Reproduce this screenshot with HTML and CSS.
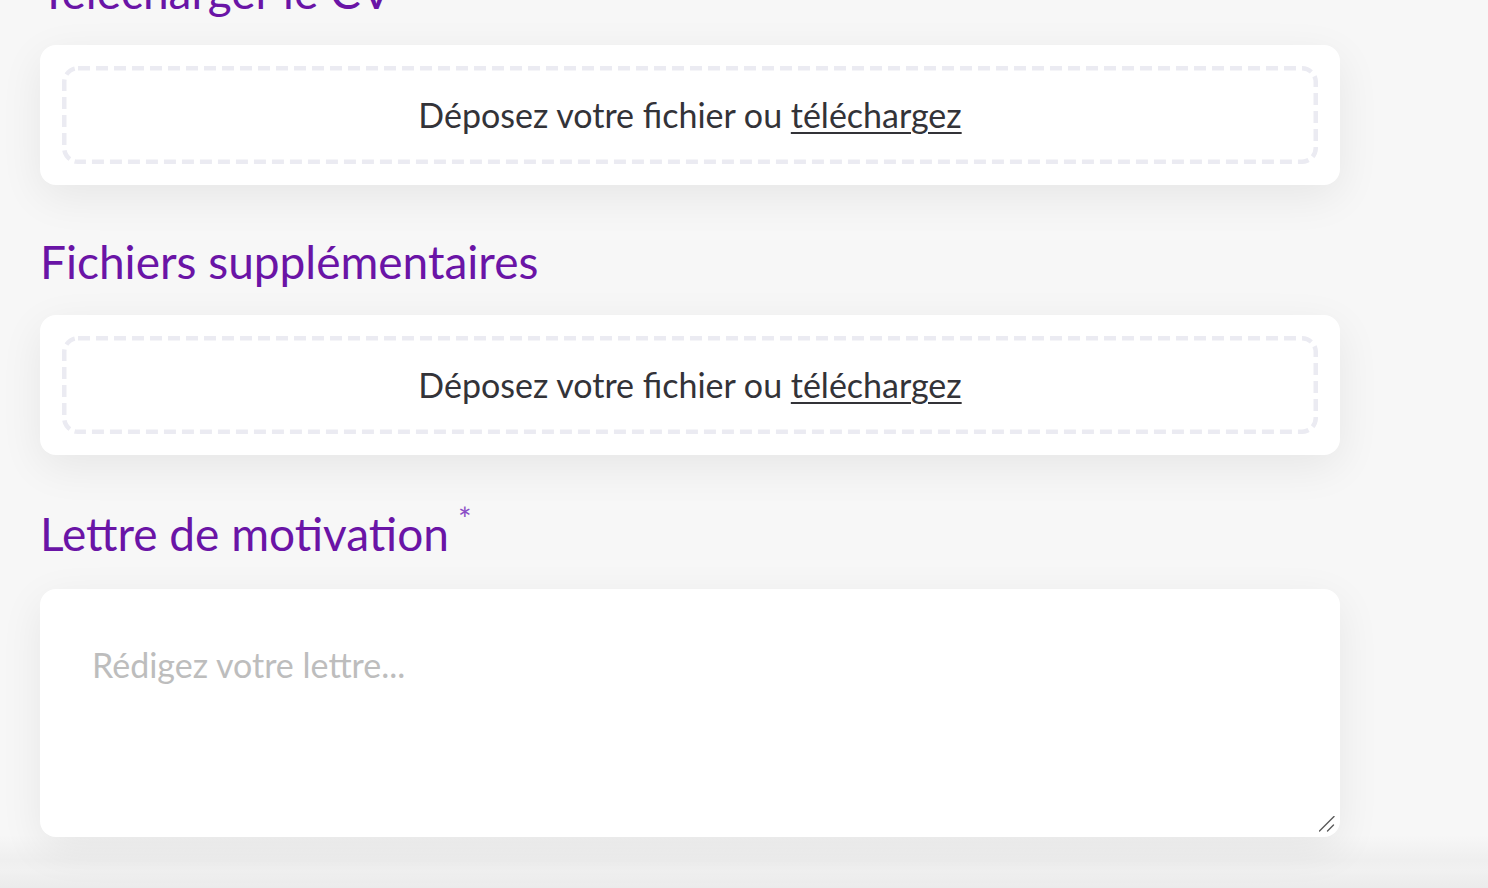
FILE: index.html
```html
<!DOCTYPE html>
<html lang="fr">
<head>
<meta charset="utf-8">
<title>Candidature</title>
<link rel="stylesheet" href="styles.css">
</head>
<body>
<main class="form">
  <section class="field">
    <h2 class="label">Télécharger le CV</h2>
    <div class="card">
      <div class="drop">
        <span>Déposez votre fichier ou <a class="link" href="#">téléchargez</a></span>
      </div>
    </div>
  </section>
  <section class="field">
    <h2 class="label">Fichiers supplémentaires</h2>
    <div class="card">
      <div class="drop">
        <span>Déposez votre fichier ou <a class="link" href="#">téléchargez</a></span>
      </div>
    </div>
  </section>
  <section class="field">
    <h2 class="label label-req">Lettre de motivation<sup class="req">*</sup></h2>
    <div class="card card-text">
      <textarea class="letter" placeholder="Rédigez votre lettre..."></textarea>
      <svg class="grip" width="16" height="16" viewBox="0 0 16 16" aria-hidden="true">
        <line x1="0.5" y1="15" x2="15" y2="0.5" stroke="#5a5a5a" stroke-width="1.4" stroke-linecap="round"/>
        <line x1="8.5" y1="15" x2="14.5" y2="9" stroke="#5a5a5a" stroke-width="1.4" stroke-linecap="round"/>
      </svg>
    </div>
  </section>
</main>
</body>
</html>
```
FILE: styles.css
```css
html, body {
  margin: 0;
  padding: 0;
  overflow: hidden;
  height: 888px;
}
html {
  background: linear-gradient(to bottom, #f7f7f7 0, #f7f7f7 835px, #efefef 860px, #f1f1f1 870px, #ebebeb 888px);
}
body {
  font-family: Lato, "Noto Sans", sans-serif;
  color: #333338;
}
.form {
  width: 1300px;
  padding: 0 40px;
  margin-top: -40px;
  display: flex;
  flex-direction: column;
  gap: 45px;
}
.field {
  display: flex;
  flex-direction: column;
}
.label {
  margin: 0 0 21px;
  font-weight: 400;
  font-size: 46px;
  line-height: 64px;
  color: #6a14a6;
}
.label-req {
  margin-top: 2px;
  margin-bottom: 23px;
}
.req {
  font-size: 32px;
  line-height: 0;
  vertical-align: 0;
  margin-left: 9px;
  position: relative;
  top: -20px;
  color: #8a4cc6;
}
.card {
  background: #fff;
  border-radius: 16px;
  box-shadow: 0 12px 44px rgba(0, 0, 0, 0.07);
  padding: 21px 22px;
}
.drop {
  height: 98px;
  box-sizing: border-box;
  padding-bottom: 2px;
  border-radius: 16px;
  background-image: url("data:image/svg+xml;utf8,<svg xmlns='http://www.w3.org/2000/svg' width='100%' height='100%'><rect x='0' y='0' width='100%' height='100%' rx='16' ry='16' fill='none' stroke='%23ebebf2' stroke-width='9' stroke-dasharray='12 6'/></svg>");
  display: flex;
  align-items: center;
  justify-content: center;
  font-size: 34px;
}
.link {
  color: #333338;
  text-decoration: underline;
  text-underline-offset: 4px;
  text-decoration-thickness: 2px;
}
.card-text {
  padding: 0;
  height: 248px;
  display: flex;
  position: relative;
}
.letter {
  flex: 1;
  border: 0;
  outline: 0;
  background: transparent;
  border-radius: 16px;
  font-family: Lato, "Noto Sans", sans-serif;
  font-size: 34px;
  color: #333;
  padding: 55px 52px 51px;
  resize: none;
}
.letter::placeholder {
  color: #bdbdbd;
}
.grip {
  position: absolute;
  right: 5px;
  bottom: 5px;
}
```
